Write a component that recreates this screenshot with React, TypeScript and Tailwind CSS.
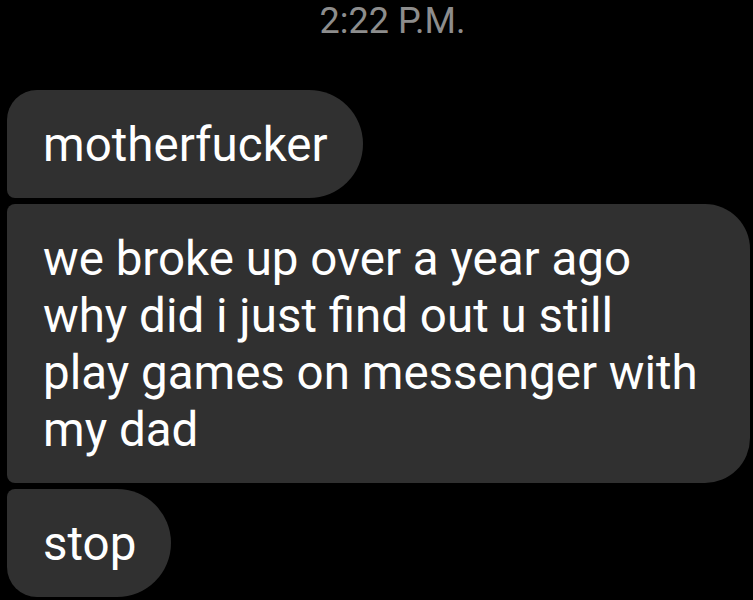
const messages = [
  {
    id: 'm1',
    lines: ['motherfucker'],
    shape: 'w-fit rounded-tl-[30px] rounded-bl-[8px] rounded-r-[54px]',
  },
  {
    id: 'm2',
    lines: [
      'we broke up over a year ago',
      'why did i just find out u still',
      'play games on messenger with',
      'my dad',
    ],
    shape: 'w-[743px] rounded-l-[8px] rounded-r-[45px]',
  },
  {
    id: 'm3',
    lines: ['stop'],
    shape: 'w-fit rounded-tl-[8px] rounded-bl-[30px] rounded-r-[54px]',
  },
];

export default function App() {
  return (
    <div className="min-h-screen overflow-hidden bg-black pl-[7px] pr-[3px] font-['Roboto',sans-serif]">
      <div className="pt-[3px] pl-[28px] text-center text-[36px] leading-[36px] text-[#8d8d8d]">
        2:22 P.M.
      </div>

      <div className="mt-[51px] flex flex-col gap-[6px]">
        {messages.map((m) => (
          <div
            key={m.id}
            className={`${m.shape} whitespace-nowrap bg-[#303030] pb-[24px] pl-[36px] pr-[35px] pt-[27px] text-[47.5px] leading-[57px] text-white`}
          >
            {m.lines.map((line) => (
              <div key={line}>{line}</div>
            ))}
          </div>
        ))}
      </div>
    </div>
  );
}
